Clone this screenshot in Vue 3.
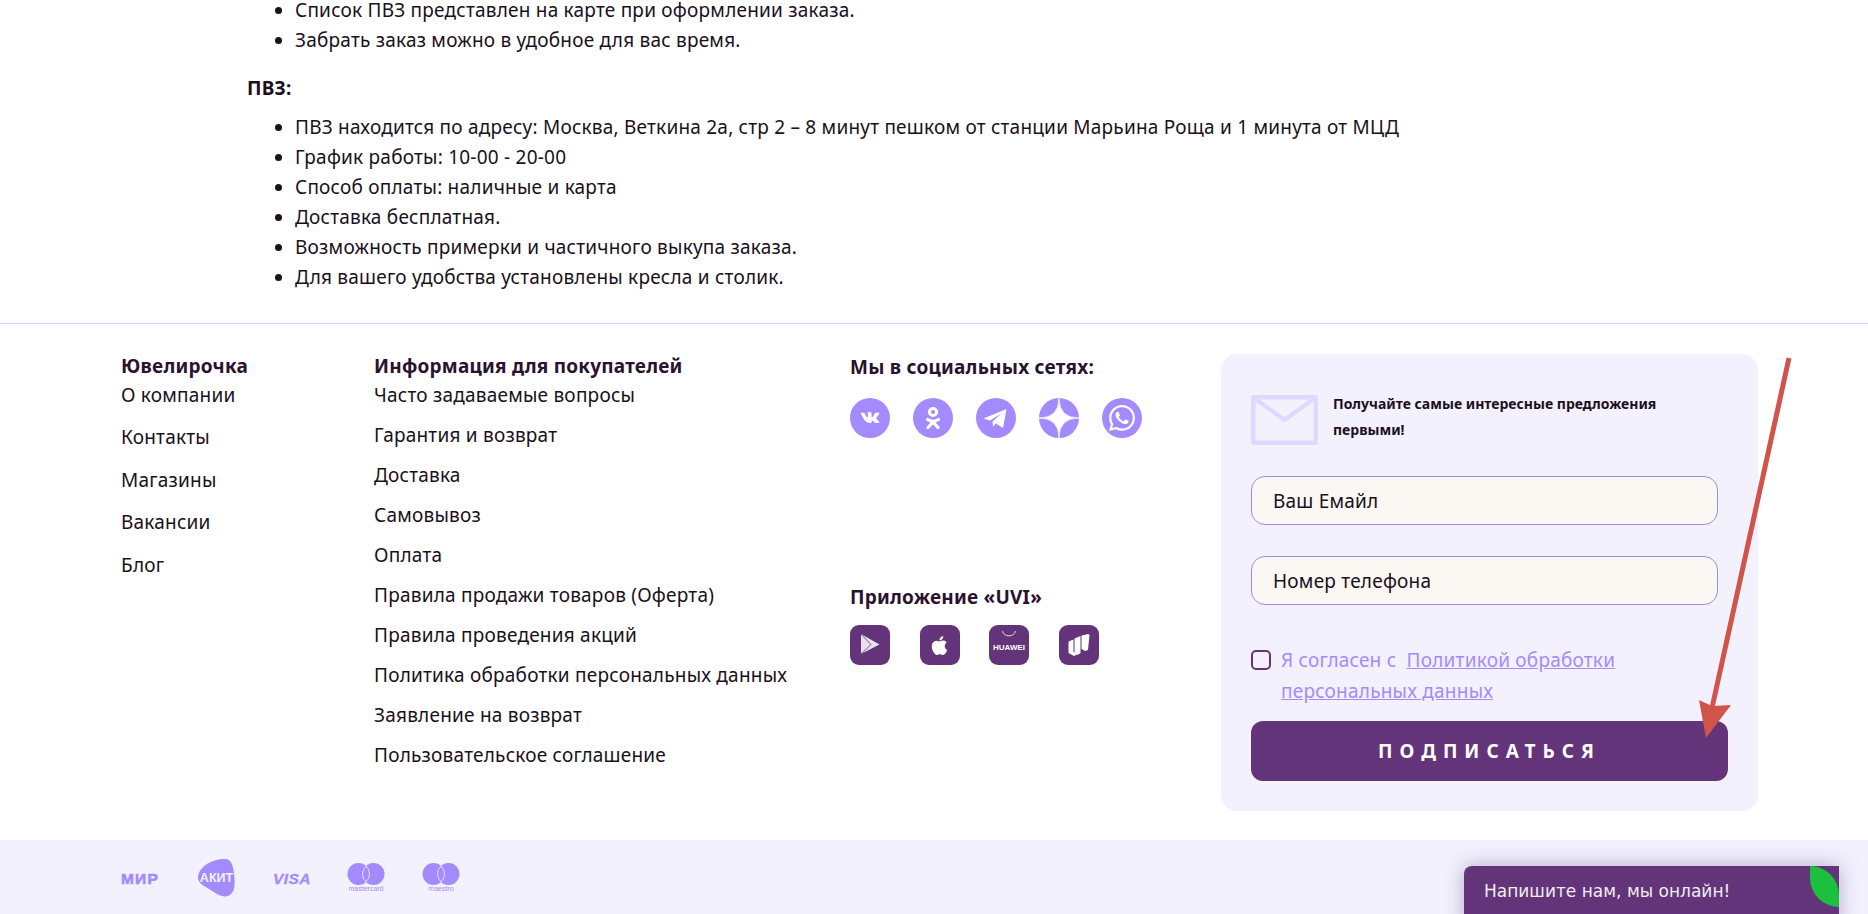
<template>
  <div class="page">
    <section class="content">
      <ul class="list first-list">
        <li>Список ПВЗ представлен на карте при оформлении заказа.</li>
        <li>Забрать заказ можно в удобное для вас время.</li>
      </ul>
      <p class="content-title">ПВЗ:</p>
      <ul class="list">
        <li v-for="item in pvzItems" :key="item">{{ item }}</li>
      </ul>
    </section>

    <footer class="footer">
      <div class="footer-main">
        <div class="col-company">
          <div class="col-title">Ювелирочка</div>
          <a v-for="link in companyLinks" :key="link" class="link company-link">{{ link }}</a>
        </div>
        <div class="col-info">
          <div class="col-title">Информация для покупателей</div>
          <a v-for="link in infoLinks" :key="link" class="link info-link">{{ link }}</a>
        </div>
        <div class="col-social">
          <div class="col-title social-title">Мы в социальных сетях:</div>
          <div class="social-row">
            <span class="social"><svg viewBox="0 0 24 24" width="28" height="28"><path fill="#fff" d="M12.785 16.241s.288-.032.436-.194c.136-.148.132-.427.132-.427s-.02-1.304.576-1.496c.588-.19 1.341 1.26 2.14 1.818.605.422 1.064.33 1.064.33l2.137-.03s1.117-.071.587-.964c-.043-.073-.308-.661-1.588-1.87-1.34-1.264-1.16-1.059.453-3.246.983-1.332 1.376-2.145 1.253-2.493-.117-.332-.84-.244-.84-.244l-2.406.015s-.178-.025-.31.056c-.13.079-.212.262-.212.262s-.382 1.03-.89 1.907c-1.07 1.85-1.499 1.948-1.674 1.832-.407-.267-.305-1.075-.305-1.648 0-1.793.267-2.54-.521-2.733-.262-.065-.454-.107-1.123-.114-.858-.009-1.585.003-1.996.208-.274.136-.485.44-.356.457.159.022.519.099.71.363.246.341.237 1.107.237 1.107s.142 2.11-.33 2.371c-.325.18-.77-.187-1.725-1.865-.489-.859-.859-1.81-.859-1.81s-.07-.176-.198-.272c-.154-.115-.37-.151-.37-.151l-2.286.015s-.343.01-.469.161C3.94 7.721 4.043 8 4.043 8s1.79 4.258 3.817 6.403c1.858 1.967 3.968 1.838 3.968 1.838h.957z"/></svg></span>
            <span class="social"><svg viewBox="0 0 40 40" width="40" height="40" fill="none" stroke="#fff"><circle cx="20" cy="14" r="3.6" stroke-width="3"/><path d="M14.5 21.500c3.400 2.200 7.600 2.200 11 0M20 24l-5 5.500M20 24l5 5.500" stroke-width="3.200" stroke-linecap="round"/></svg></span>
            <span class="social"><svg viewBox="0 0 40 40" width="40" height="40"><path fill="#fff" d="M7.500 20.500 30.500 11 27 30 20 25.500 17 28.500 16.500 23.500 26 15 14 22.500z"/></svg></span>
            <span class="social"><svg viewBox="0 0 40 40" width="40" height="40"><path fill="#fff" stroke="#fff" stroke-width=".7" d="M20 0Q20 20 40 20Q20 20 20 40Q20 20 0 20Q20 20 20 0z"/></svg></span>
            <span class="social"><svg viewBox="0 0 24 24" width="26" height="26"><path fill="#fff" d="M17.472 14.382c-.297-.149-1.758-.867-2.03-.967-.273-.099-.471-.148-.67.15-.197.297-.767.966-.94 1.164-.173.199-.347.223-.644.075-.297-.15-1.255-.463-2.39-1.475-.883-.788-1.48-1.761-1.653-2.059-.173-.297-.018-.458.13-.606.134-.133.298-.347.446-.52.149-.174.198-.298.298-.497.099-.198.05-.371-.025-.52-.075-.149-.669-1.612-.916-2.207-.242-.579-.487-.5-.669-.51-.173-.008-.371-.01-.57-.01-.198 0-.52.074-.792.372-.272.297-1.04 1.016-1.04 2.479 0 1.462 1.065 2.875 1.213 3.074.149.198 2.096 3.2 5.077 4.487.709.306 1.262.489 1.694.625.712.227 1.36.195 1.871.118.571-.085 1.758-.719 2.006-1.413.248-.694.248-1.289.173-1.413-.074-.124-.272-.198-.57-.347m-5.421 7.403h-.004a9.87 9.87 0 01-5.031-1.378l-.361-.214-3.741.982.998-3.648-.235-.374a9.86 9.86 0 01-1.51-5.26c.001-5.45 4.436-9.884 9.888-9.884 2.64 0 5.122 1.03 6.988 2.898a9.825 9.825 0 012.893 6.994c-.003 5.45-4.437 9.884-9.885 9.884m8.413-18.297A11.815 11.815 0 0012.05 0C5.495 0 .16 5.335.157 11.892c0 2.096.547 4.142 1.588 5.945L.057 24l6.305-1.654a11.882 11.882 0 005.683 1.448h.005c6.554 0 11.89-5.335 11.893-11.893a11.821 11.821 0 00-3.48-8.413z"/></svg></span>
          </div>
          <div class="col-title app-title">Приложение «UVI»</div>
          <div class="app-row">
            <span class="app"><svg viewBox="0 0 40 40" width="40" height="40"><path fill="#fff" fill-opacity=".85" d="M11 9 29.500 19.500 11 29z"/><path fill="none" stroke="#63347a" stroke-width=".8" d="M11 9l10 10.500L11 29"/></svg></span>
            <span class="app"><svg viewBox="0 0 24 24" width="19" height="19"><path fill="#fff" d="M12.152 6.896c-.948 0-2.415-1.078-3.96-1.04-2.04.027-3.91 1.183-4.961 3.014-2.117 3.675-.546 9.103 1.519 12.09 1.013 1.454 2.208 3.09 3.792 3.039 1.52-.065 2.09-.987 3.935-.987 1.831 0 2.35.987 3.96.948 1.637-.026 2.676-1.48 3.676-2.948 1.156-1.688 1.636-3.325 1.662-3.415-.039-.013-3.182-1.221-3.22-4.857-.026-3.04 2.48-4.494 2.597-4.559-1.429-2.09-3.623-2.324-4.39-2.376-2-.156-3.675 1.09-4.61 1.09zM15.53 3.83c.843-1.012 1.4-2.427 1.245-3.83-1.207.052-2.662.805-3.532 1.818-.78.896-1.454 2.338-1.273 3.714 1.338.104 2.715-.688 3.559-1.701"/></svg></span>
            <span class="app"><svg viewBox="0 0 40 40" width="40" height="40"><path fill="none" stroke="#fff" stroke-width=".8" d="M13.500 6c1 6.500 12 6.500 13 0"/><text x="20" y="25" text-anchor="middle" class="huawei">HUAWEI</text></svg></span>
            <span class="app"><svg viewBox="0 0 40 40" width="40" height="40"><path fill="#fff" d="M9.500 16.500l5-2v12.500l3.500 2.500-3 1.500-5.500-3zM15.500 13.500l6-2.500v17l-3 2-3-2.500zM22.500 10.500l7-1.500 1 1-1.500 15-3 1-3.500-2z"/></svg></span>
          </div>
        </div>
        <form class="subscribe" @submit.prevent>
          <div class="subscribe-head">
            <svg class="mail" viewBox="0 0 67 50" width="67" height="50" fill="none" stroke="#e0d9ff" stroke-width="4.500" stroke-linejoin="round"><rect x="2.250" y="2.250" width="62.500" height="45.500"/><path d="M3 3l30.500 22L64 3"/></svg>
            <div class="subscribe-text">Получайте самые интересные предложения первыми!</div>
          </div>
          <input class="field" placeholder="Ваш Емайл" />
          <input class="field" placeholder="Номер телефона" />
          <div class="agree">
            <span class="checkbox"></span>
            <div class="agree-text">Я согласен с &nbsp;<a class="agree-link">Политикой обработки персональных данных</a></div>
          </div>
          <button class="submit" type="submit">ПОДПИСАТЬСЯ</button>
        </form>
      </div>

      <div class="footer-bottom">
        <svg class="pay" viewBox="0 0 40 16" width="40" height="16"><text x="0" y="13.500" class="pay-mir">МИР</text></svg>
        <svg class="pay" viewBox="0 0 38 38" width="38" height="38"><path fill="#a38bff" d="M0 17C2 7 14 0 27 0c6 0 8 6 9 14 1 9 2 20-6 23-6 2-13-3-19-7C6 27-1 24 0 17z"/><text x="18.500" y="23" text-anchor="middle" class="pay-akit-text">АКИТ</text></svg>
        <svg class="pay" viewBox="0 0 37 16" width="37" height="16"><text x="0" y="13.500" class="pay-visa">VISA</text></svg>
        <svg v-for="card in cards" :key="card" class="pay" viewBox="0 0 38 30" width="38" height="30">
          <circle cx="11.500" cy="11" r="11" fill="#a38bff"/>
          <circle cx="26.500" cy="11" r="11" fill="#a38bff"/>
          <path fill="#a38bff" stroke="#f3f1fe" stroke-width=".8" d="M19 3A11 11 0 0 1 19 19A11 11 0 0 1 19 3z"/>
          <text x="19" y="28" text-anchor="middle" class="pay-small">{{ card }}</text>
        </svg>
      </div>
    </footer>

    <svg class="arrow" viewBox="0 0 1868 914" width="1868" height="914">
      <path d="M1789 358 1712 708" stroke="#d1544a" stroke-width="5" fill="none"/>
      <path fill="#d1544a" d="M1699 700 1712 706 1731 705 1706 738z"/>
    </svg>

    <div class="chat">
      <span class="chat-text">Напишите нам, мы онлайн!</span>
      <span class="chat-leaf"></span>
    </div>
  </div>
</template>

<script setup>
const pvzItems = [
  "ПВЗ находится по адресу: Москва, Веткина 2а, стр 2 – 8 минут пешком от станции Марьина Роща и 1 минута от МЦД",
  "График работы: 10-00 - 20-00",
  "Способ оплаты: наличные и карта",
  "Доставка бесплатная.",
  "Возможность примерки и частичного выкупа заказа.",
  "Для вашего удобства установлены кресла и столик.",
];

const companyLinks = ["О компании", "Контакты", "Магазины", "Вакансии", "Блог"];

const infoLinks = [
  "Часто задаваемые вопросы",
  "Гарантия и возврат",
  "Доставка",
  "Самовывоз",
  "Оплата",
  "Правила продажи товаров (Оферта)",
  "Правила проведения акций",
  "Политика обработки персональных данных",
  "Заявление на возврат",
  "Пользовательское соглашение",
];

const cards = ["mastercard", "maestro"];
</script>

<style>
html,
body {
  margin: 0;
  overflow: hidden;
}
</style>

<style scoped>
.page {
  position: relative;
  height: 914px;
  overflow: hidden;
  background: #fff;
  color: #1b0f21;
  font-family: "Noto Sans", "Open Sans", sans-serif;
  font-size: 19px;
  letter-spacing: 0.22px;
}

.content {
  padding-left: 247px;
  height: 328px;
}

.list {
  margin: 0;
  padding-left: 48px;
  line-height: 30px;
}

.first-list {
  margin-top: -5px;
}

.content-title {
  margin: 18px 0 9px;
  font-weight: 700;
  line-height: 30px;
}

.footer {
  border-top: 1px solid #d0ccff;
}

.footer-main {
  display: flex;
  height: 516px;
  padding: 30px 0 0 121px;
  box-sizing: border-box;
}

.col-company {
  display: flex;
  flex-direction: column;
  width: 253px;
}

.col-info {
  display: flex;
  flex-direction: column;
  width: 476px;
}

.col-social {
  width: 371px;
  padding-top: 1px;
}

.col-title {
  margin-bottom: 5px;
  color: #2a1230;
  font-weight: 700;
  line-height: 24px;
}

.link {
  line-height: 24px;
}

.company-link {
  margin-bottom: 18.4px;
}

.info-link {
  margin-bottom: 16px;
}

.social-title {
  margin-bottom: 19px;
}

.social-row {
  display: flex;
  gap: 23px;
}

.social {
  display: flex;
  align-items: center;
  justify-content: center;
  width: 40px;
  height: 40px;
  border-radius: 50%;
  background: #a38bff;
}

.app-title {
  margin-top: 147px;
  margin-bottom: 16px;
}

.app-row {
  display: flex;
  gap: 29.5px;
}

.app {
  display: flex;
  align-items: center;
  justify-content: center;
  width: 40px;
  height: 40px;
  border-radius: 9px;
  background: #63347a;
}

.huawei {
  font: 700 8px "Liberation Sans", sans-serif;
  letter-spacing: 0;
  fill: #fff;
}

.subscribe {
  width: 537px;
  height: 457px;
  box-sizing: border-box;
  padding: 43px 30px 0;
  border-radius: 16px;
  background: #f3f1fe;
}

.subscribe-head {
  display: flex;
  gap: 15px;
  margin-bottom: 29px;
}

.mail {
  flex: none;
  margin-top: -2px;
  margin-bottom: 2px;
}

.subscribe-text {
  margin-top: -6px;
  width: 370px;
  font-size: 14px;
  font-weight: 700;
  letter-spacing: 0;
  line-height: 26px;
}

.field {
  display: block;
  width: 467px;
  height: 49px;
  box-sizing: border-box;
  margin-bottom: 31px;
  padding: 0 21px;
  border: 1px solid #9f8be6;
  border-radius: 14px;
  outline: none;
  background: #fbf7f3;
  color: #1b0f21;
  font: inherit;
  letter-spacing: inherit;
}

.field::placeholder {
  color: #1b0f21;
  opacity: 1;
}

.agree {
  display: flex;
  gap: 10px;
  margin-top: 40px;
  width: 405px;
  color: #a38bff;
  line-height: 31px;
}

.checkbox {
  flex: none;
  width: 20px;
  height: 20px;
  margin-top: 5px;
  box-sizing: border-box;
  border: 2px solid #63347a;
  border-radius: 5px;
}

.agree-link {
  text-decoration: underline;
}

.submit {
  display: block;
  width: 477px;
  height: 60px;
  margin-top: 14px;
  border: none;
  border-radius: 12px;
  background: #63347a;
  color: #fff;
  font: inherit;
  font-weight: 700;
  letter-spacing: 7px;
}

.footer-bottom {
  display: flex;
  align-items: center;
  gap: 37px;
  height: 76px;
  padding: 19px 0 19px 121px;
  box-sizing: border-box;
  background: #f3f1fe;
}

.pay {
  flex: none;
}

.pay-mir {
  font: 700 15.5px "Liberation Sans", sans-serif;
  letter-spacing: 1.2px;
  fill: #a38bff;
  stroke: #a38bff;
  stroke-width: 0.6px;
}

.pay-visa {
  font: italic 700 15.5px "Liberation Sans", sans-serif;
  letter-spacing: 0.4px;
  fill: #a38bff;
  stroke: #a38bff;
  stroke-width: 0.3px;
}

.pay-akit-text {
  font: 700 12.5px "Liberation Sans", sans-serif;
  letter-spacing: 0;
  fill: #f3f1fe;
}

.pay-small {
  font: 400 7px "Liberation Sans", sans-serif;
  letter-spacing: 0;
  fill: #a38bff;
}

.arrow {
  position: absolute;
  top: 0;
  left: 0;
  pointer-events: none;
}

.chat {
  position: absolute;
  left: 1464px;
  top: 866px;
  width: 375px;
  height: 60px;
  box-sizing: border-box;
  padding: 14px 20px;
  border-radius: 8px 0 0 0;
  background: #63347a;
  box-shadow: 0 0 20px rgba(60, 40, 90, 0.35);
  color: #eee;
  font-family: "DejaVu Sans", sans-serif;
  font-size: 17px;
  letter-spacing: 0;
  line-height: 22px;
}

.chat-leaf {
  position: absolute;
  top: 0;
  right: 0;
  width: 29px;
  height: 41px;
  border-radius: 0 29px 0 29px;
  background: #1bc03f;
}
</style>
